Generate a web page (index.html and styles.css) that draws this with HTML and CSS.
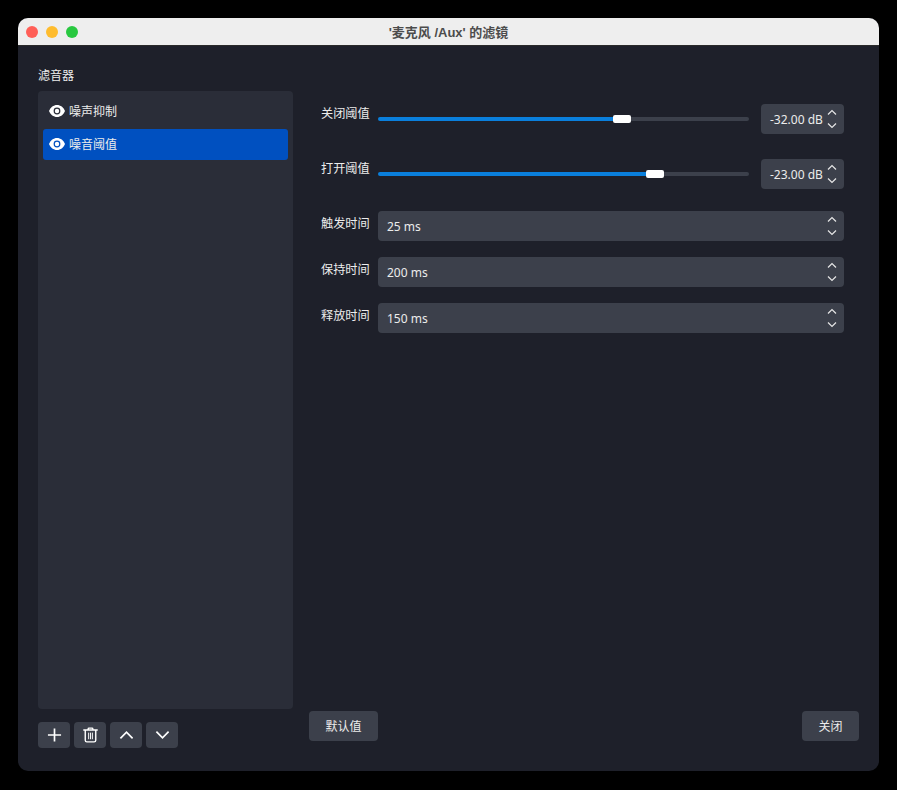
FILE: index.html
```html
<!DOCTYPE html>
<html lang="zh-CN">
<head>
    <meta charset="UTF-8">
    <meta name="viewport" content="width=device-width, initial-scale=1.0">
    <title>滤镜</title>
    <link rel="stylesheet" href="styles.css">
</head>
<body>
    <div class="window">
        <div class="titlebar">
            <div class="lights">
                <span class="light red"></span>
                <span class="light yellow"></span>
                <span class="light green"></span>
            </div>
            <div class="title">'麦克风 /Aux' 的滤镜</div>
        </div>
        <div class="content">
            <div class="sidebar">
                <div class="sideLabel">滤音器</div>
                <div class="filterList">
                    <div class="filterItem">
                        <svg class="eye" viewBox="0 0 16 12"><path d="M8 0C4.500 0 1.500 2.300 0 6c1.500 3.700 4.500 6 8 6s6.500-2.300 8-6C14.500 2.300 11.500 0 8 0z" fill="#fff"/><circle cx="8" cy="6" r="3.400" fill="#2a2d38"/><circle cx="8" cy="6" r="2.200" fill="#fff"/></svg>
                        <span>噪声抑制</span>
                    </div>
                    <div class="filterItem selected">
                        <svg class="eye" viewBox="0 0 16 12"><path d="M8 0C4.500 0 1.500 2.300 0 6c1.500 3.700 4.500 6 8 6s6.500-2.300 8-6C14.500 2.300 11.500 0 8 0z" fill="#fff"/><circle cx="8" cy="6" r="3.400" fill="#0050c0"/><circle cx="8" cy="6" r="2.200" fill="#fff"/></svg>
                        <span>噪音阈值</span>
                    </div>
                </div>
                <div class="toolRow">
                    <button class="toolBtn"><svg viewBox="0 0 16 16"><path d="M8 1v14M1 8h14" stroke="#fff" stroke-width="1.800" fill="none"/></svg></button>
                    <button class="toolBtn"><svg viewBox="0 0 16 16"><path d="M.3 2.600h15.400M5.500 2.600V1.500q0-.8.8-.8h3.400q.8 0 .8.8v1.100M2.400 2.600v10.900q0 1.800 1.800 1.800h7.600q1.800 0 1.800-1.800V2.600" stroke="#fff" stroke-width="1.500" fill="none"/><path d="M6 5.500v7M8 5.500v7M10 5.500v7" stroke="#fff" stroke-width="1" fill="none"/></svg></button>
                    <button class="toolBtn"><svg viewBox="0 0 16 10"><path d="M1.500 8.500L8 2l6.500 6.500" stroke="#fff" stroke-width="1.800" fill="none"/></svg></button>
                    <button class="toolBtn"><svg viewBox="0 0 16 10"><path d="M1.500 1.500L8 8l6.500-6.500" stroke="#fff" stroke-width="1.800" fill="none"/></svg></button>
                </div>
            </div>
            <div class="main">
                <div class="form">
                    <div class="sliderGroup">
                        <div class="row sliderRow">
                            <label>关闭阈值</label>
                            <div class="slider">
                                <div class="fill" style="width: 63.300%"></div>
                                <div class="thumb"></div>
                                <div class="rest"></div>
                            </div>
                            <div class="spin small">
                                <span class="val">-32.00 dB</span>
                                <svg class="arrows" viewBox="0 0 10 20"><path d="M1 5.500l4-4 4 4M1 14.500l4 4 4-4" stroke="#e6e6e6" stroke-width="1.200" fill="none"/></svg>
                            </div>
                        </div>
                        <div class="row sliderRow">
                            <label>打开阈值</label>
                            <div class="slider">
                                <div class="fill" style="width: 72.200%"></div>
                                <div class="thumb"></div>
                                <div class="rest"></div>
                            </div>
                            <div class="spin small">
                                <span class="val">-23.00 dB</span>
                                <svg class="arrows" viewBox="0 0 10 20"><path d="M1 5.500l4-4 4 4M1 14.500l4 4 4-4" stroke="#e6e6e6" stroke-width="1.200" fill="none"/></svg>
                            </div>
                        </div>
                    </div>
                    <div class="row">
                        <label>触发时间</label>
                        <div class="spin wide">
                            <span class="text">25 ms</span>
                            <svg class="arrows" viewBox="0 0 10 20"><path d="M1 5.500l4-4 4 4M1 14.500l4 4 4-4" stroke="#e6e6e6" stroke-width="1.200" fill="none"/></svg>
                        </div>
                    </div>
                    <div class="row">
                        <label>保持时间</label>
                        <div class="spin wide">
                            <span class="text">200 ms</span>
                            <svg class="arrows" viewBox="0 0 10 20"><path d="M1 5.500l4-4 4 4M1 14.500l4 4 4-4" stroke="#e6e6e6" stroke-width="1.200" fill="none"/></svg>
                        </div>
                    </div>
                    <div class="row">
                        <label>释放时间</label>
                        <div class="spin wide">
                            <span class="text">150 ms</span>
                            <svg class="arrows" viewBox="0 0 10 20"><path d="M1 5.500l4-4 4 4M1 14.500l4 4 4-4" stroke="#e6e6e6" stroke-width="1.200" fill="none"/></svg>
                        </div>
                    </div>
                </div>
                <div class="footer">
                    <button class="btn defaults">默认值</button>
                    <button class="btn close">关闭</button>
                </div>
            </div>
        </div>
    </div>
</body>
</html>
```

FILE: styles.css
```css
html, body{
    height: 100%;
}
body{
    margin: 0;
    background-color: #000;
    font-family: "Noto Sans", "Noto Sans CJK SC", sans-serif;
    font-size: 12px;
    color: #ececec;
    overflow: hidden;
}
button{
    font-family: inherit;
    border: none;
    color: inherit;
    padding: 0;
}
.window{
    width: 861px;
    height: 753px;
    margin: 18px;
    border-radius: 10px;
    background-color: #1e202a;
    overflow: hidden;
    display: flex;
    flex-direction: column;
}
.titlebar{
    height: 28px;
    box-sizing: border-box;
    padding-bottom: 1px;
    background-color: #eeeeee;
    border-bottom: 1px solid #2a2a2a;
    display: flex;
    align-items: center;
    justify-content: center;
    position: relative;
    flex: none;
}
.lights{
    position: absolute;
    left: 8px;
    top: 8px;
    display: flex;
    gap: 8px;
}
.light{
    width: 12px;
    height: 12px;
    border-radius: 50%;
}
.red{
    background-color: #ff5f57;
}
.yellow{
    background-color: #febc2e;
}
.green{
    background-color: #28c840;
}
.title{
    font-family: "Liberation Sans", "Noto Sans CJK SC", sans-serif;
    font-size: 13px;
    font-weight: bold;
    color: #4c4c4c;
}
.content{
    flex: 1;
    display: flex;
    gap: 16px;
    padding: 20px 20px 23px 20px;
    min-height: 0;
}
.sidebar{
    width: 255px;
    display: flex;
    flex-direction: column;
}
.sideLabel{
    height: 25px;
    line-height: 20px;
}
.filterList{
    flex: 1;
    background-color: #2a2d38;
    border-radius: 4px;
    padding: 5px;
    display: flex;
    flex-direction: column;
    gap: 2px;
}
.filterItem{
    height: 31px;
    box-sizing: border-box;
    padding-bottom: 1px;
    border-radius: 3px;
    display: flex;
    align-items: center;
    gap: 4px;
    padding-left: 6px;
}
.filterItem.selected{
    background-color: #0050c0;
}
.eye{
    width: 16px;
    height: 12px;
}
.toolRow{
    display: flex;
    gap: 4px;
    margin-top: 13px;
}
.toolBtn{
    width: 32px;
    height: 26px;
    background-color: #3c404b;
    border-radius: 4px;
    display: flex;
    align-items: center;
    justify-content: center;
}
.toolBtn svg{
    width: 15px;
    height: 16px;
}
.main{
    flex: 1;
    display: flex;
    flex-direction: column;
    padding-bottom: 7px;
}
.form{
    flex: 1;
    padding: 38px 15px 0 12px;
    display: flex;
    flex-direction: column;
    gap: 16px;
}
.sliderGroup{
    display: flex;
    flex-direction: column;
    gap: 25px;
    margin-bottom: 6px;
}
.row{
    display: flex;
    gap: 8px;
    height: 30px;
}
.row label{
    width: 49px;
    flex: none;
    font-size: 12.200px;
    line-height: 26px;
}
.sliderRow label{
    line-height: 20px;
}
.slider{
    flex: 1;
    display: flex;
    align-items: center;
}
.fill{
    height: 4px;
    background-color: #0a7fdc;
    border-radius: 2px 0 0 2px;
}
.thumb{
    width: 18px;
    height: 8px;
    background-color: #fff;
    border-radius: 2px;
    flex: none;
}
.rest{
    flex: 1;
    height: 4px;
    background-color: #3c404b;
    border-radius: 0 2px 2px 0;
}
.spin{
    height: 30px;
    background-color: #3c404b;
    border-radius: 4px;
    display: flex;
    align-items: center;
    justify-content: space-between;
    padding-right: 7px;
    box-sizing: border-box;
}
.small{
    width: 83px;
    margin-left: 4px;
    padding-left: 9px;
}
.wide{
    flex: 1;
    padding-left: 9px;
}
.arrows{
    width: 10px;
    height: 20px;
    flex: none;
}
.btn{
    height: 30px;
    background-color: #3c404b;
    border-radius: 4px;
    font-size: 12px;
}
.footer{
    display: flex;
    justify-content: space-between;
}
.defaults{
    width: 69px;
}
.close{
    width: 57px;
}
```
